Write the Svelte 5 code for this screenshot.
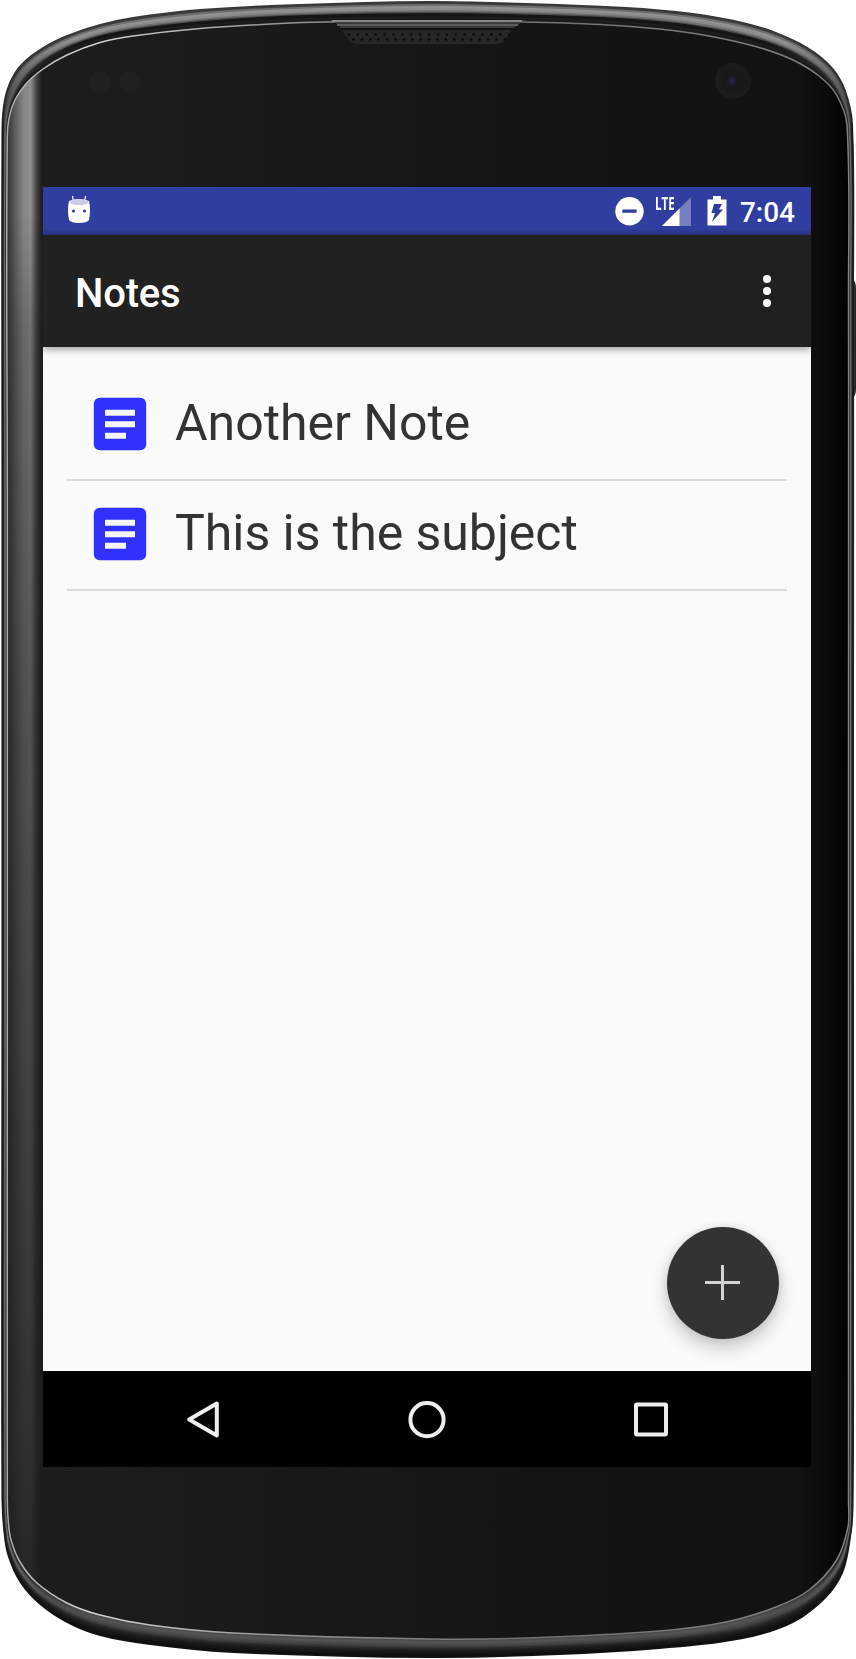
<script>
  const notes = ['Another Note', 'This is the subject'];

  // Contours of the handset, clockwise from the middle of the top edge.
  const outer = [
    [430, 1], [526, 3], [626, 7], [693, 13], [743, 22], [776, 32], [809, 48], [833, 68], [846, 91], [853, 125],
    [854, 300], [854, 800], [854, 1300],
    [853.5, 1507], [851, 1537], [843, 1573], [826, 1598], [793, 1623], [743, 1639], [659, 1649], [559, 1655],
    [430, 1658], [233, 1653], [150, 1645], [100, 1636], [67, 1623], [40, 1605], [20, 1583], [8, 1557], [4, 1537],
    [1.5, 1500], [1.5, 1000], [1.5, 500],
    [1.5, 135], [3, 106], [9, 83], [21, 64], [43, 47], [67, 35], [100, 24], [133, 17], [200, 9], [300, 4]
  ];
  const inner = [
    [430, 21], [523, 22], [600, 24.5], [659, 29], [709, 36], [759, 47.5], [793, 60], [819, 76], [836, 94], [847, 125],
    [848.5, 300], [848.5, 800], [848.5, 1300],
    [848.5, 1500], [848, 1527], [836, 1561], [809, 1590], [776, 1607], [726, 1622], [659, 1631], [526, 1638],
    [430, 1639], [233, 1633], [150, 1625], [100, 1615], [67, 1603], [37, 1583], [20, 1562], [11, 1540], [8.3, 1522],
    [7.3, 1500], [7.3, 1000], [7.3, 500],
    [7.3, 136], [12, 107], [25, 85], [43, 69], [67, 55], [100, 42.5], [133, 36], [200, 28.5], [280, 23.5], [327, 22]
  ];

  function contour(t) {
    const p = outer.map(([x, y], i) => [x + (inner[i][0] - x) * t, y + (inner[i][1] - y) * t]);
    const n = p.length;
    let d = `M${p[0][0]} ${p[0][1]}`;
    for (let i = 0; i < n; i++) {
      const a = p[(i + n - 1) % n], b = p[i], c = p[(i + 1) % n], e = p[(i + 2) % n];
      const len = Math.hypot(c[0] - b[0], c[1] - b[1]);
      const h1 = len / Math.max(Math.hypot(c[0] - a[0], c[1] - a[1]), 1) / 3;
      const h2 = len / Math.max(Math.hypot(e[0] - b[0], e[1] - b[1]), 1) / 3;
      d += `C${b[0] + (c[0] - a[0]) * h1} ${b[1] + (c[1] - a[1]) * h1} ${c[0] - (e[0] - b[0]) * h2} ${c[1] - (e[1] - b[1]) * h2} ${c[0]} ${c[1]}`;
    }
    return d + 'Z';
  }

  // t, then the grey level at the top, on the sides and at the bottom.
  const stops = [
    [0, 55, 40, 18], [0.07, 60, 25, 14], [0.15, 110, 25, 18], [0.25, 145, 30, 24], [0.36, 138, 45, 32],
    [0.46, 112, 80, 44], [0.54, 75, 110, 58], [0.6, 22, 110, 68], [0.68, 20, 80, 76], [0.77, 30, 35, 84],
    [0.85, 24, 20, 78], [0.92, 30, 30, 72]
  ];
  const grey = (v) => `rgb(${v},${v},${v + 1})`;
  const face = contour(1);
  const holes = Array.from({ length: 19 }, (_, i) => i);
</script>

<svelte:head><title>Notes</title></svelte:head>

<div class="phone">
  <svg class="shell" width="856" height="1659" viewBox="0 0 856 1659" aria-hidden="true">
    <defs>
      {#each stops as [t, top, side, bottom], i}
        <linearGradient id="band{i}" gradientUnits="userSpaceOnUse" x1="0" y1="0" x2="0" y2="1659">
          <stop offset="0" stop-color={grey(top)} />
          <stop offset=".025" stop-color={grey(top)} />
          <stop offset=".08" stop-color={grey(side)} />
          <stop offset=".93" stop-color={grey(side)} />
          <stop offset=".975" stop-color={grey(bottom)} />
          <stop offset="1" stop-color={grey(bottom)} />
        </linearGradient>
      {/each}
      <linearGradient id="glass" x1="0" y1="0" x2="1" y2="0">
        <stop offset="0" stop-color="#1d1d1d" /><stop offset=".2" stop-color="#1b1b1b" />
        <stop offset=".6" stop-color="#151515" /><stop offset=".94" stop-color="#121212" />
        <stop offset=".975" stop-color="#0a0a0a" /><stop offset="1" stop-color="#020202" />
      </linearGradient>
      <linearGradient id="gleam" gradientUnits="userSpaceOnUse" x1="7" y1="0" x2="44" y2="0">
        <stop offset="0" stop-color="#303030" /><stop offset=".2" stop-color="#5a5a5a" />
        <stop offset=".45" stop-color="#858585" /><stop offset=".64" stop-color="#8e8e8e" />
        <stop offset=".78" stop-color="#4a4a4a" /><stop offset=".9" stop-color="#252525" />
        <stop offset="1" stop-color="#1d1d1d" stop-opacity="0" />
      </linearGradient>
      <linearGradient id="fade" x1="0" y1="0" x2="0" y2="1">
        <stop offset="0" stop-color="#fff" /><stop offset=".13" stop-color="#fff" />
        <stop offset=".2" stop-color="#b8b8b8" />
        <stop offset=".42" stop-color="#7c7c7c" /><stop offset=".85" stop-color="#333" />
        <stop offset=".92" stop-color="#222" /><stop offset="1" stop-color="#000" />
      </linearGradient>
      <mask id="fadeMask"><rect width="60" height="1659" fill="url(#fade)" /></mask>
      <linearGradient id="rimLight" x1="0" y1="0" x2="1" y2="0">
        <stop offset="0" stop-color="#aaa" /><stop offset=".1" stop-color="#d4d4d4" />
        <stop offset=".3" stop-color="#99999c" /><stop offset=".6" stop-color="#707073" />
        <stop offset="1" stop-color="#808080" />
      </linearGradient>
      <clipPath id="faceClip"><path d={face} /></clipPath>
    </defs>

    <path d="M853 279q3 3 3 9v101q0 6-3 9z" fill="#292929" />
    {#each stops as [t], i}
      <path d={contour(t)} fill="url(#band{i})" />
    {/each}
    <path d={face} fill="url(#glass)" />
    <g clip-path="url(#faceClip)">
      <rect x="0" y="60" width="46" height="1580" fill="url(#gleam)" mask="url(#fadeMask)" />
    </g>
    <path d={face} fill="none" stroke="url(#rimLight)" stroke-width="1.5" />

    <path d="M329 20Q334 21 339 26L343 30H511L518 25Q522 21 526 20Z" fill="#3b3b3d" />
    <path d="M332 21H522" stroke="#88888b" stroke-width="1.8" />
    <path d="M337 25H518" stroke="#5c5c5f" stroke-width="1.8" />
    <path d="M341 29H513" stroke="#111" stroke-width="2" />
    <path d="M342 30H512L505 40Q502 44 496 44H358Q352 44 349 40Z" fill="#262626" />
    <g fill="#0b0b0b">
      {#each holes as i}
        <circle cx={349 + i * 8.9} cy="34.5" r="1.3" />
        <circle cx={353.5 + i * 8.4} cy="39.5" r="1.3" />
      {/each}
    </g>

    <g fill="#202020"><circle cx="100" cy="82" r="11" /><circle cx="130" cy="82" r="11" /></g>
    <circle cx="733" cy="81" r="18" fill="#1b1b1b" />
    <circle cx="733" cy="81" r="12" fill="#191919" />
    <circle cx="732" cy="81" r="5" fill="#1d1b31" />
    <circle cx="732" cy="81" r="2.2" fill="#29244b" />
  </svg>

  <main class="screen">
    <div class="status">
      <svg class="droid" width="24" height="28" viewBox="0 0 24 28">
        <path d="M5.5 1l1 6M18.5 1l-1 6" stroke="#fff" stroke-width="1.2" />
        <path d="M2 6Q12 2 22 6Q24 15 22 25Q20 28 12 28Q4 28 2 25Q0 15 2 6Z" fill="#fff" />
        <ellipse cx="12" cy="7.2" rx="9.6" ry="2.9" fill="#c8cce6" />
        <circle cx="6.5" cy="16" r="1.6" fill="#303f9f" /><circle cx="17.5" cy="16" r="1.6" fill="#303f9f" />
      </svg>
      <svg width="29" height="29" viewBox="0 0 29 29">
        <circle cx="14.5" cy="14.2" r="14.2" fill="#fff" /><rect x="7.3" y="12.5" width="14.4" height="3.3" rx=".5" fill="#303f9f" />
      </svg>
      <div class="signal">
        <span>LTE</span>
        <svg width="29" height="29" viewBox="0 0 29 29">
          <path d="M29 0V29H0Z" fill="#757fbd" /><path d="M17.5 11.5V29H0Z" fill="#fff" />
        </svg>
      </div>
      <svg class="battery" width="20" height="30" viewBox="0 0 20 30">
        <path d="M6 0h8v3.5h5.5V29.5H.5V3.5H6Z" fill="#fff" />
        <path d="M7 8H15L12 13.5H16L5 26L8 17H4.5Z" fill="#303f9f" />
      </svg>
      <time>7:04</time>
    </div>

    <header>
      <h1>Notes</h1>
      <svg width="8" height="32" viewBox="0 0 8 32" fill="#fff">
        <circle cx="4" cy="4" r="4" /><circle cx="4" cy="16" r="4" /><circle cx="4" cy="28" r="4" />
      </svg>
    </header>

    <section>
      <ul>
        {#each notes as note}
          <li>
            <svg width="54" height="54" viewBox="0 0 54 54">
              <rect x=".8" y=".8" width="52.4" height="52.4" rx="6" fill="#3030ff" />
              <path d="M12 15.7H42M12 27.2H42M12 38.7H33" stroke="#f5f5fc" stroke-width="6" />
            </svg>
            <span>{note}</span>
          </li>
        {/each}
      </ul>
      <button aria-label="Add note">
        <svg width="36" height="36" viewBox="0 0 36 36"><path d="M17.5 0V35M0 17.5H35" stroke="#d4d4d4" stroke-width="3" /></svg>
      </button>
    </section>

    <nav>
      <svg width="38" height="40" viewBox="0 0 38 40"><path d="M5.2 20.5L32.8 4.5V36.5Z" /></svg>
      <svg width="38" height="40" viewBox="0 0 38 40"><circle cx="19" cy="20.7" r="16.6" /></svg>
      <svg width="38" height="40" viewBox="0 0 38 40"><rect x="4" y="5.5" width="30" height="30" rx="1" /></svg>
    </nav>
  </main>
</div>

<style>
  :global(body) { margin: 0; background: #fff; }
  .phone {
    position: relative;
    box-sizing: border-box;
    width: 856px;
    height: 1659px;
    padding: 187px 45px 0 43px;
    overflow: hidden;
    font-family: Roboto, sans-serif;
  }
  .shell { position: absolute; left: 0; top: 0; }
  svg { display: block; flex: none; }
  .screen {
    position: relative;
    display: flex;
    flex-direction: column;
    width: 768px;
    height: 1280px;
    overflow: hidden;
    background: #fafafa;
  }
  .status {
    box-sizing: border-box;
    display: flex;
    align-items: center;
    height: 48px;
    padding: 0 16px 0 24px;
    background: linear-gradient(#303f9f 42px, #2a3689 48px);
  }
  .droid { margin: 0 auto 4px 0; }
  .signal { display: flex; align-items: flex-start; margin: 1px 16px 0 11px; }
  .signal span {
    width: 7px;
    font: 700 17px/14px "Open Sans", sans-serif;
    color: #fff;
    transform: scaleX(.68);
    transform-origin: left;
    z-index: 1;
  }
  .battery { margin-top: -1px; }
  time { margin-left: 13px; font-size: 28px; font-weight: 500; line-height: 48px; color: #fff; padding-top: 4px; }
  header {
    box-sizing: border-box;
    position: relative;
    display: flex;
    align-items: center;
    justify-content: space-between;
    height: 112px;
    padding: 0 40px 0 32px;
    background: #212121;
    box-shadow: 0 2px 8px rgba(0, 0, 0, .4);
  }
  h1 { margin: 6px 0 0; font-size: 40px; font-weight: 500; line-height: 48px; letter-spacing: -.2px; color: #fff; }
  section { display: flex; flex-direction: column; flex: 1; padding: 24px 24px 0; }
  ul { margin: 0; padding: 0; list-style: none; }
  li {
    box-sizing: border-box;
    display: flex;
    align-items: center;
    gap: 28px;
    height: 110px;
    padding: 0 0 2px 26px;
    border-bottom: 2px solid #dadada;
  }
  li span { font-size: 50px; line-height: 58px; letter-spacing: -.03px; color: #333; margin-top: -3px; }
  button {
    display: flex;
    align-items: center;
    justify-content: center;
    width: 112px;
    height: 112px;
    margin: auto 8px 32px auto;
    padding: 0;
    border: 0;
    border-radius: 50%;
    background: #333;
    box-shadow: 0 9px 18px rgba(0, 0, 0, .2), 0 0 8px rgba(0, 0, 0, .1);
  }
  nav {
    display: flex;
    align-items: center;
    justify-content: center;
    gap: 186px;
    height: 96px;
    background: #000;
    fill: none;
    stroke: #eee;
    stroke-width: 4;
    stroke-linejoin: round;
  }
</style>
